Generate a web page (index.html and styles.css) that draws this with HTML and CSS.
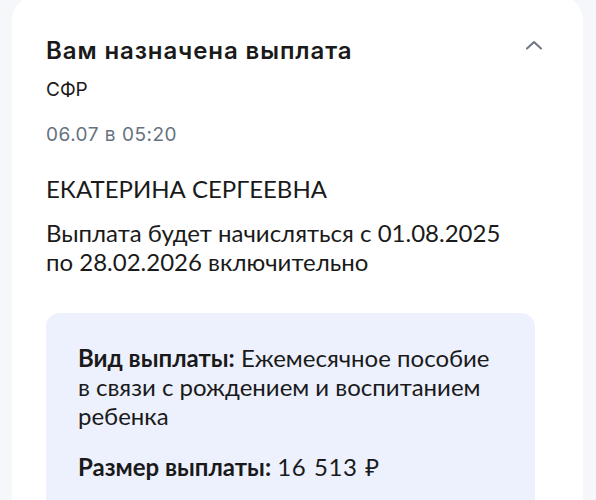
FILE: index.html
```html
<!DOCTYPE html>
<html lang="ru">
<head>
    <meta charset="UTF-8">
    <meta name="viewport" content="width=device-width, initial-scale=1.0">
    <title>Уведомление</title>
    <link rel="stylesheet" href="styles.css">
</head>
<body>

    <div class="card">
        <div class="card-head">
            <h2 class="title">Вам назначена выплата</h2>
            <button class="toggle" aria-label="Свернуть">
                <svg width="18" height="12" viewBox="0 0 18 12">
                    <path d="M2 9.5 L9 3 L16 9.5" fill="none" stroke="#6e7788" stroke-width="2" stroke-linecap="round" stroke-linejoin="round"/>
                </svg>
            </button>
        </div>
        <div class="sender">СФР</div>
        <div class="date">06.07 в 05:20</div>

        <div class="body">
            <p class="name">ЕКАТЕРИНА СЕРГЕЕВНА</p>
            <p>Выплата будет начисляться с 01.08.2025<br>по 28.02.2026 включительно</p>
        </div>

        <div class="details">
            <p><b>Вид выплаты:</b> Ежемесячное пособие<br>в связи с рождением и воспитанием<br>ребенка</p>
            <p><b>Размер выплаты:</b> <span class="amount">16 513 ₽</span></p>
        </div>
    </div>

</body>
</html>
```

FILE: styles.css
```css
body {
    margin: 0;
    background-color: #f6f7fb;
    font-family: Inter, "Noto Sans", sans-serif;
    color: #1a1a1a;
}
.card {
    margin: -4px 13px 0 12px;
    padding: 39px 48px 40px 34px;
    background: white;
    border-radius: 24px;
}
.card-head {
    display: flex;
    justify-content: space-between;
    align-items: flex-start;
}
.title {
    margin: 0;
    font-size: 24px;
    line-height: 32px;
    font-weight: 600;
    letter-spacing: 0.9px;
}
.toggle {
    border: none;
    background: none;
    padding: 0;
    margin: 4px -8px 0 0;
    cursor: pointer;
}
.sender {
    margin-top: 11px;
    font-size: 19px;
    line-height: 24px;
}
.date {
    margin-top: 21px;
    font-size: 19px;
    line-height: 24px;
    letter-spacing: 0.5px;
    color: #66727f;
}
.body {
    margin-top: 27px;
    font-family: Lato, "Noto Sans", sans-serif;
    font-size: 24px;
    line-height: 29px;
}
.body p {
    margin: 0;
}
.body .name {
    margin-bottom: 15px;
}
.details {
    margin-top: 37px;
    padding: 30px 32px 30px 32px;
    background: #edf1fd;
    border-radius: 14px;
    font-family: Lato, "Noto Sans", sans-serif;
    font-size: 24px;
    line-height: 29px;
}
.details p {
    margin: 0 0 22px 0;
}
.details b {
    font-weight: 700;
}
.amount {
    word-spacing: 1px;
    letter-spacing: 0.6px;
}
```
